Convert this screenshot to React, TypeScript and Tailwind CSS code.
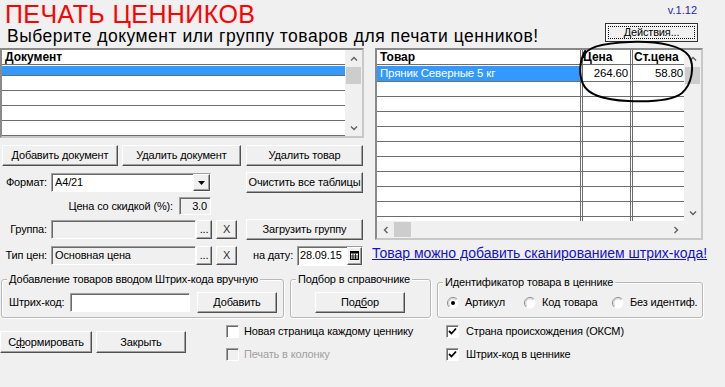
import React from 'react';

const raised =
  'bg-[#f0f0f0] border border-t-white border-l-white border-b-[#505050] border-r-[#505050] shadow-[inset_-1px_-1px_0_#a0a0a0]';
const sunken =
  'border border-t-[#a0a0a0] border-l-[#a0a0a0] border-b-white border-r-white shadow-[inset_1px_1px_0_#696969]';
const grid = 'border-[#6d6d6d]';

function Btn({ className = '', children }: { className?: string; children?: React.ReactNode }) {
  return (
    <div className={`${raised} flex items-center justify-center leading-none whitespace-nowrap ${className}`}>
      {children}
    </div>
  );
}

function Chevron({ dir }: { dir: 'up' | 'down' | 'left' | 'right' }) {
  const d = {
    up: 'M1 5.5 L4 2.5 L7 5.5',
    down: 'M1 2.5 L4 5.5 L7 2.5',
    left: 'M5.5 1 L2.5 4 L5.5 7',
    right: 'M2.5 1 L5.5 4 L2.5 7',
  }[dir];
  return (
    <svg width="8" height="8" viewBox="0 0 8 8">
      <path d={d} fill="none" stroke="#606060" strokeWidth="1.4" />
    </svg>
  );
}

function VScroll() {
  return (
    <div className="w-[17px] h-full bg-[#f0f0f0] flex flex-col items-center shrink-0">
      <div className="h-[17px] w-full flex items-center justify-center">
        <Chevron dir="up" />
      </div>
      <div className="w-[15px] h-[17px] bg-[#cdcdcd]" />
      <div className="flex-1" />
      <div className="h-[17px] w-full flex items-center justify-center">
        <Chevron dir="down" />
      </div>
    </div>
  );
}

function HScroll() {
  return (
    <div className="h-[17px] bg-[#f0f0f0] flex items-center shrink-0">
      <div className="w-[17px] h-full flex items-center justify-center">
        <Chevron dir="left" />
      </div>
      <div className="w-[17px] h-[15px] bg-[#cdcdcd]" />
      <div className="flex-1" />
      <div className="w-[17px] h-full flex items-center justify-center">
        <Chevron dir="right" />
      </div>
      <div className="w-[17px] h-full" />
    </div>
  );
}

function Check({ checked = false, disabled = false }: { checked?: boolean; disabled?: boolean }) {
  return (
    <div className={`w-[13px] h-[13px] shrink-0 ${sunken} ${disabled ? 'bg-[#f0f0f0]' : 'bg-white'} flex items-center justify-center`}>
      {checked && (
        <svg width="9" height="9" viewBox="0 0 9 9">
          <path d="M1 4 L3.5 6.5 L8 1.5" fill="none" stroke="#000" strokeWidth="1.8" />
        </svg>
      )}
    </div>
  );
}

function Radio({ checked = false }: { checked?: boolean }) {
  return (
    <svg width="12" height="12" viewBox="0 0 12 12" className="shrink-0">
      <circle cx="6" cy="6" r="5.5" fill="#fff" />
      <path d="M2.1 9.9 A5.5 5.5 0 0 1 9.9 2.1" stroke="#8a8a8a" strokeWidth="1" fill="none" />
      <path d="M3 9 A4.2 4.2 0 0 1 9 3" stroke="#c8c8c8" strokeWidth="1" fill="none" />
      {checked && <circle cx="6" cy="6" r="2" fill="#000" />}
    </svg>
  );
}

function GroupBox({ className = '', title, children }: { className?: string; title: string; children?: React.ReactNode }) {
  return (
    <div className={`border border-[#b8b8b8] rounded-[3px] shadow-[inset_1px_1px_0_#fff,1px_1px_0_#fff] pb-[4px] ${className}`}>
      <div className="-mt-[8px] ml-[5px] px-[2px] w-fit bg-[#f0f0f0] leading-[14px] whitespace-nowrap">{title}</div>
      {children}
    </div>
  );
}

function LeftTable() {
  return (
    <div className="w-[364px] h-[90px] bg-white border-2 border-t-[#8a8a8a] border-l-[#8a8a8a] border-r-[#c8c8c8] border-b-[#c8c8c8] flex">
      <div className="flex-1 flex flex-col overflow-hidden">
        <div className={`h-[15px] border-b ${grid} pl-[3px] font-bold text-[12px] tracking-normal leading-[14px]`}>Документ</div>
        <div className={`h-[16px] mt-[1px] bg-[#3399ff] border-b ${grid}`} />
        {[0, 1, 2, 3].map((i) => (
          <div key={i} className={`h-[15px] shrink-0 border-b ${grid}`} />
        ))}
      </div>
      <VScroll />
    </div>
  );
}

function Row({ a, b, c, sel = false, h = 'h-[15px]' }: { a?: string; b?: string; c?: string; sel?: boolean; h?: string }) {
  return (
    <div className={`${h} shrink-0 flex border-b ${grid} text-[11.5px]`}>
      <div className={`w-[203px] pl-[3px] leading-[14px] whitespace-nowrap ${sel ? 'bg-[#3399ff] text-white' : ''}`}>{a}</div>
      <div className={`w-[3px] border-x ${grid}`} />
      <div className="w-[47px] text-right pr-[2px] leading-[14px]">{b}</div>
      <div className={`w-[3px] border-x ${grid}`} />
      <div className="flex-1 text-right pr-[1px] leading-[14px]">{c}</div>
    </div>
  );
}

function RightTable() {
  return (
    <div className="w-[328px] h-[192px] bg-white border-2 border-t-[#8a8a8a] border-l-[#8a8a8a] border-r-[#c8c8c8] border-b-[#c8c8c8] flex flex-col">
      <div className="flex-1 flex min-h-0">
        <div className="flex-1 flex flex-col overflow-hidden">
          <div className={`h-[15px] shrink-0 flex border-b ${grid} font-bold text-[12px] tracking-normal leading-[14px]`}>
            <div className="w-[203px] pl-[3px]">Товар</div>
            <div className={`w-[3px] border-x ${grid}`} />
            <div className="w-[47px]">Цена</div>
            <div className={`w-[3px] border-x ${grid}`} />
            <div className="flex-1 pl-[1px]">Ст.цена</div>
          </div>
          <div className="h-[1px] shrink-0 flex">
            <div className="w-[203px]" />
            <div className={`w-[3px] border-x ${grid}`} />
            <div className="w-[47px]" />
            <div className={`w-[3px] border-x ${grid}`} />
          </div>
          <Row a="Пряник Северные 5 кг" b="264.60" c="58.80" sel h="h-[16px]" />
          {Array.from({ length: 10 }).map((_, i) => (
            <Row key={i} />
          ))}
        </div>
        <VScroll />
      </div>
      <HScroll />
    </div>
  );
}

function Dots() {
  return <Btn className="w-[16px] h-[19px] !items-end pb-[3px] text-[11px]">...</Btn>;
}

export default function App() {
  return (
    <div className="relative w-[725px] h-[387px] overflow-hidden bg-[#f0f0f0] font-['Liberation_Sans',Arial,sans-serif] text-[11px] tracking-[-0.15px] text-black">
      {/* header */}
      <div className="flex justify-between h-[48px] pr-[27px]">
        <div className="flex flex-col">
          <div className="h-[28px] pl-[5px] text-[25px] leading-[28px] tracking-[0.4px] text-[#ff0000] whitespace-nowrap">
            ПЕЧАТЬ ЦЕННИКОВ
          </div>
          <div className="pl-[7px] text-[17.5px] leading-[16px] tracking-[0.5px] whitespace-nowrap">
            Выберите документ или группу товаров для печати ценников!
          </div>
        </div>
        <div className="flex flex-col items-end">
          <div className="text-[11px] leading-[13px] mt-[4px] mr-[1px] tracking-normal text-[#2525b5]">v.1.12</div>
          <div className="w-[93px] h-[19px] mt-[6px] border border-[#303030] bg-[#f0f0f0] p-[2px] shadow-[inset_1px_1px_0_#fff]">
            <div className="h-full border border-dotted border-black flex items-center justify-center leading-none">
              Действия...
            </div>
          </div>
        </div>
      </div>

      {/* main area */}
      <div className="flex">
        <div className="w-[364px] flex flex-col">
          <LeftTable />
          <div className="flex mt-[7px] h-[21px] pl-[2px]">
            <Btn className="w-[116px]">Добавить документ</Btn>
            <Btn className="w-[119px] ml-[4px]">Удалить документ</Btn>
            <Btn className="w-[117px] ml-[5px]">Удалить товар</Btn>
          </div>

          <div className="flex items-center mt-[6px] h-[21px]">
            <div className="w-[47px] text-right">Формат:</div>
            <div className={`ml-[4px] w-[160px] h-[19px] bg-white ${sunken} flex items-center`}>
              <span className="flex-1 pl-[3px] leading-none">А4/21</span>
              <Btn className="w-[17px] h-full">
                <svg width="7" height="4" viewBox="0 0 7 4">
                  <path d="M0 0 H7 L3.5 4 Z" fill="#000" />
                </svg>
              </Btn>
            </div>
            <Btn className="ml-[35px] w-[117px] h-[21px]">Очистить все таблицы</Btn>
          </div>

          <div className="flex items-center mt-[4px] h-[18px]">
            <div className="w-[173px] text-right whitespace-nowrap">Цена со скидкой (%):</div>
            <div className={`ml-[6px] w-[32px] h-[18px] ${sunken} flex items-center justify-end pr-[3px] leading-none`}>3.0</div>
          </div>

          <div className="flex items-center mt-[4px] h-[21px]">
            <div className="w-[47px] text-right">Группа:</div>
            <div className={`ml-[4px] w-[145px] h-[19px] bg-[#f0f0f0] ${sunken}`} />
            <Dots />
            <Btn className="ml-[4px] w-[21px] h-[19px] text-[#303030]">X</Btn>
            <Btn className="ml-[9px] w-[117px] h-[21px]">Загрузить группу</Btn>
          </div>

          <div className="flex items-center mt-[5px] h-[21px]">
            <div className="w-[47px] text-right whitespace-nowrap">Тип цен:</div>
            <div className={`ml-[4px] w-[145px] h-[19px] bg-[#f0f0f0] ${sunken} flex items-center pl-[3px] leading-none`}>
              Основная цена
            </div>
            <Dots />
            <Btn className="ml-[4px] w-[21px] h-[19px] text-[#303030]">X</Btn>
            <div className="ml-[9px] w-[117px] flex items-center justify-between">
              <span className="ml-[7px] whitespace-nowrap">на дату:</span>
              <div className={`w-[66px] h-[20px] bg-white ${sunken} flex items-center`}>
                <span className="flex-1 pl-[2px] leading-none">28.09.15</span>
                <Btn className="w-[15px] h-full">
                  <svg width="9" height="9" viewBox="0 0 9 9">
                    <rect x="0.5" y="0.5" width="8" height="8" fill="#fff" stroke="#000" />
                    <rect x="0.5" y="0.5" width="8" height="2" fill="#000" />
                    <path d="M0.5 5 H8.5 M0.5 7 H8.5 M3 2.5 V8.5 M5.5 2.5 V8.5" stroke="#000" strokeWidth="0.8" />
                  </svg>
                </Btn>
              </div>
            </div>
          </div>
        </div>

        <div className="ml-[11px] w-[328px] flex flex-col">
          <RightTable />
          <div className="-ml-[3px] mt-[5px] text-[14px] tracking-normal leading-[16px] text-[#1010d0] underline whitespace-nowrap">
            Товар можно добавить сканированием штрих-кода!
          </div>
        </div>
      </div>

      {/* group boxes */}
      <div className="flex items-start mt-[6px] pl-[1px]">
        <GroupBox className="w-[283px] mt-[7px]" title="Добавление товаров вводом Штрих-кода вручную">
          <div className="flex items-center h-[21px] mt-[6px] pl-[7px]">
            <span className="w-[61px] whitespace-nowrap">Штрих-код:</span>
            <div className={`w-[120px] h-[19px] bg-white ${sunken}`} />
            <Btn className="ml-[7px] w-[80px] h-[21px]">Добавить</Btn>
          </div>
        </GroupBox>
        <GroupBox className="w-[141px] ml-[6px] mt-[7px]" title="Подбор в справочнике">
          <div className="flex items-center h-[21px] mt-[6px] pl-[24px]">
            <Btn className="w-[90px] h-[21px]">
              <span>
                Под<span className="underline">б</span>ор
              </span>
            </Btn>
          </div>
        </GroupBox>
        <GroupBox className="w-[266px] ml-[6px] mt-[10px]" title="Идентификатор товара в ценнике">
          <div className="flex items-center h-[21px] mt-[3px] pl-[9px]">
            <div className="w-[77px] flex items-center gap-[6px]">
              <Radio checked />
              <span>Артикул</span>
            </div>
            <div className="w-[88px] flex items-center gap-[6px]">
              <Radio />
              <span className="whitespace-nowrap">Код товара</span>
            </div>
            <div className="flex items-center gap-[6px]">
              <Radio />
              <span className="whitespace-nowrap">Без идентиф.</span>
            </div>
          </div>
        </GroupBox>
      </div>

      {/* bottom */}
      <div className="flex items-start mt-[2px]">
        <div className="flex mt-[11px]">
          <Btn className="w-[92px] h-[22px]">
            <span>
              С<span className="underline">ф</span>ормировать
            </span>
          </Btn>
          <Btn className="ml-[4px] w-[90px] h-[22px]">Закрыть</Btn>
        </div>
        <div className="ml-[40px] w-[220px] flex flex-col">
          <div className="h-[23px] flex items-center gap-[5px]">
            <Check />
            <span className="whitespace-nowrap">Новая страница каждому ценнику</span>
          </div>
          <div className="h-[23px] flex items-center gap-[5px]">
            <Check disabled />
            <span className="whitespace-nowrap text-[#a0a0a0]">Печать в колонку</span>
          </div>
        </div>
        <div className="flex flex-col">
          <div className="h-[23px] flex items-center gap-[7px]">
            <Check checked />
            <span className="whitespace-nowrap">Страна происхождения (ОКСМ)</span>
          </div>
          <div className="h-[23px] flex items-center gap-[7px]">
            <Check checked />
            <span className="whitespace-nowrap">Штрих-код в ценнике</span>
          </div>
        </div>
      </div>

      {/* hand-drawn mark */}
      <svg className="absolute inset-0 pointer-events-none" width="725" height="387" viewBox="0 0 725 387">
        <path
          d="M584 57 C585 47 604 43 630 42 C660 41 682 46 689 56 C695 66 692 84 682 93 C672 101 650 102 628 101 C605 100 588 95 583 84 C579 75 579 62 585 51"
          fill="none"
          stroke="#000"
          strokeWidth="2"
          strokeLinecap="round"
        />
      </svg>
    </div>
  );
}
